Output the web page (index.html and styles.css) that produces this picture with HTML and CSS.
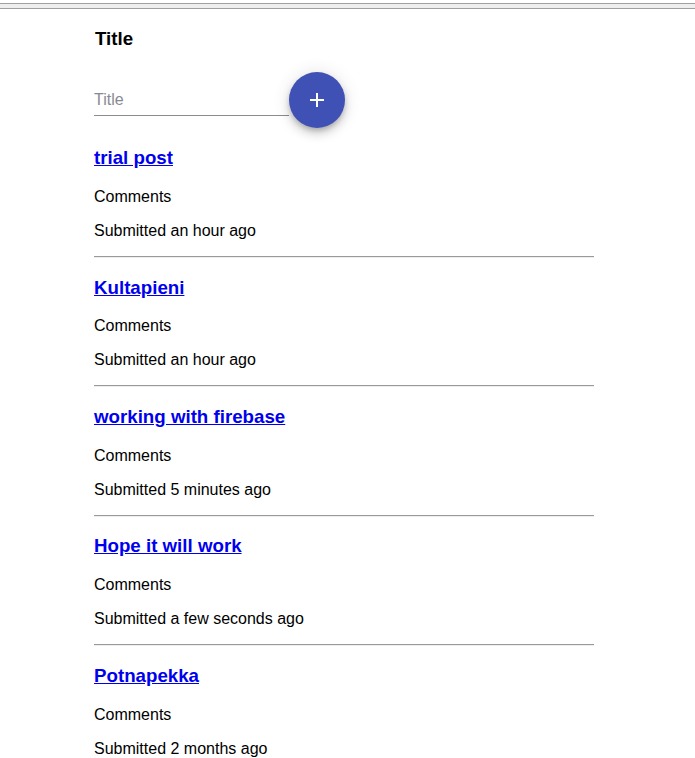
FILE: index.html
```html
<!DOCTYPE html>
<html>
<head>
<meta charset="utf-8">
<link rel="stylesheet" href="styles.css">
</head>
<body>
<div class="topbar"></div>
<div class="page">
  <h3 class="heading">Title</h3>
  <form class="new-post">
    <div class="field">
      <input class="field-input" type="text" placeholder="Title">
    </div>
    <button class="fab" type="button" aria-label="Add">
      <svg width="24" height="24" viewBox="0 0 24 24"><path d="M19 13h-6v6h-2v-6H5v-2h6V5h2v6h6v2z" fill="#fff"/></svg>
    </button>
  </form>
  <div class="post">
    <h3 class="post-title"><a href="#">trial post</a></h3>
    <p class="line">Comments</p>
    <p class="line">Submitted an hour ago</p>
    <hr class="sep">
  </div>
  <div class="post">
    <h3 class="post-title"><a href="#">Kultapieni</a></h3>
    <p class="line">Comments</p>
    <p class="line">Submitted an hour ago</p>
    <hr class="sep">
  </div>
  <div class="post">
    <h3 class="post-title"><a href="#">working with firebase</a></h3>
    <p class="line">Comments</p>
    <p class="line">Submitted 5 minutes ago</p>
    <hr class="sep">
  </div>
  <div class="post">
    <h3 class="post-title"><a href="#">Hope it will work</a></h3>
    <p class="line">Comments</p>
    <p class="line">Submitted a few seconds ago</p>
    <hr class="sep">
  </div>
  <div class="post">
    <h3 class="post-title"><a href="#">Potnapekka</a></h3>
    <p class="line">Comments</p>
    <p class="line">Submitted 2 months ago</p>
    <hr class="sep">
  </div>
</div>
</body>
</html>
```
FILE: styles.css
```css
html, body {
  margin: 0;
  padding: 0;
  background: #fff;
}
body {
  font-family: "Liberation Sans", Arial, sans-serif;
  font-size: 16px;
  color: #000;
}
.topbar {
  margin-top: 3px;
  height: 4px;
  background: #eeeeee;
  border-top: 1px solid #a0a0a0;
  border-bottom: 1px solid #a0a0a0;
}
.page {
  width: 500px;
  margin-left: 94px;
}
.heading {
  font-size: 18.72px;
  font-weight: bold;
  margin: 18.72px 0 18.72px 1px;
}
.new-post {
  display: flex;
  align-items: center;
  padding-top: 4px;
  margin: 0;
}
.field {
  width: 195px;
  border-bottom: 1px solid rgba(0,0,0,0.45);
  padding: 6px 0 6px;
}
.field-input {
  width: 100%;
  border: 0;
  outline: 0;
  padding: 0;
  margin: 0;
  height: 19px;
  font-family: "Liberation Sans", Arial, sans-serif;
  font-size: 16px;
  background: transparent;
  color: #333;
}
.field-input::placeholder {
  color: #868b92;
  opacity: 1;
}
.fab {
  width: 56px;
  height: 56px;
  border-radius: 50%;
  border: 0;
  padding: 0;
  background: #3f51b5;
  display: flex;
  align-items: center;
  justify-content: center;
  box-shadow: 0 3px 5px -1px rgba(0,0,0,0.2), 0 6px 10px 0 rgba(0,0,0,0.14), 0 1px 18px 0 rgba(0,0,0,0.12);
  flex-shrink: 0;
}
.post-title {
  font-size: 18.72px;
  font-weight: bold;
  margin: 18.72px 0;
}
.post-title a {
  color: #0000ee;
  text-decoration: underline;
}
.line {
  margin: 16px 0;
}
.sep {
  margin: 8px 0;
  border: 0;
  border-top: 1px solid #9a9a9a;
  border-bottom: 1px solid #eeeeee;
  height: 0;
}
```
